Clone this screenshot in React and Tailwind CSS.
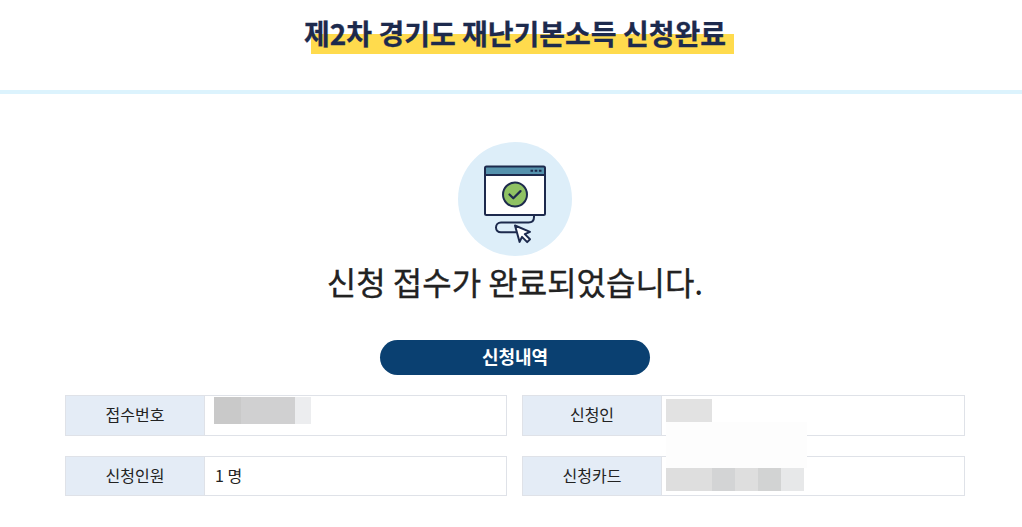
const fontStack = { fontFamily: '"Noto Sans CJK KR", "Noto Sans", sans-serif' };

function CompleteIcon() {
  return (
    <svg width="114" height="114" viewBox="0 0 114 114" fill="none">
      <circle cx="57" cy="57" r="57" fill="#ddeef9" />
      <rect x="27" y="24.5" width="60" height="48.5" rx="1.5" fill="#ffffff" />
      <path d="M27 33V26a1.5 1.5 0 0 1 1.5-1.5h57A1.5 1.5 0 0 1 87 26v7z" fill="#5592ad" />
      <rect x="27" y="24.5" width="60" height="48.5" rx="1.5" stroke="#1d2a4d" strokeWidth="2" />
      <path d="M27 33H87" stroke="#1d2a4d" strokeWidth="2" />
      <path d="M72.5 28.7h2.6M76.7 28.7h2.6M80.9 28.7h2.6" stroke="#1d2a4d" strokeWidth="2" />
      <circle cx="57" cy="52.5" r="12" fill="#8fc263" stroke="#1d2a4d" strokeWidth="2" />
      <path d="M51.5 52.5l3.8 3.8 7.2-7.2" stroke="#1d2a4d" strokeWidth="2.2" strokeLinecap="round" strokeLinejoin="round" />
      <path d="M76 73v2c0 3.5-2 5.5-5.5 5.5H43c-3 0-5 2.2-5 5s2 4.8 5 4.8h15" stroke="#1d2a4d" strokeWidth="2" strokeLinecap="round" />
      <path d="M57 83.5l15 6.4-5.2 2.2 5.2 5.2-2.8 2.8-5.2-5.2-2.4 5z" fill="#ffffff" stroke="#1d2a4d" strokeWidth="2" strokeLinejoin="round" />
    </svg>
  );
}

function InfoCell({ label, children }) {
  return (
    <div className="flex h-[40.5px] border border-[#dfe2e8] bg-white">
      <div className="flex w-[139px] shrink-0 items-center justify-center border-r border-[#dfe2e8] bg-[#e4ecf6] pb-[2px] text-[16px] text-[#222222]">
        {label}
      </div>
      <div className="flex flex-1 items-center px-[10px] pb-[2px] text-[16px] text-[#222222]">{children}</div>
    </div>
  );
}

export default function App() {
  return (
    <div className="h-[527px] w-[1022px] overflow-hidden bg-white" style={fontStack}>
      <header className="flex h-[94px] justify-center border-b-4 border-[#dcf3fd] pt-[13px] pl-[8px]">
        <h1 className="relative h-[40px] text-[28px] leading-[40px] font-bold text-[#1d2a4d] [-webkit-text-stroke:0.3px_#1d2a4d]">
          <span className="absolute top-[21px] right-[-8px] left-[7px] h-[20px] bg-[#ffdb4d]" />
          <span className="relative">제2차 경기도 재난기본소득 신청완료</span>
        </h1>
      </header>

      <main className="flex flex-col items-center pt-[48px]">
        <div className="flex w-full flex-col items-center pl-[8px]">
          <CompleteIcon />
          <h2 className="mt-[2px] h-[46px] text-[32px] leading-[46px] font-normal text-[#222222]">
            <span className="[-webkit-text-stroke:0.35px_#222222]">신청 접수가 완료되었습니다</span>.
          </h2>
          <div className="mt-[36px] flex h-[35px] w-[270px] items-center justify-center rounded-full bg-[#0a4071] pb-[2px] text-[18px] font-bold text-white">
            신청내역
          </div>
        </div>

        <div className="relative mt-[20px] grid w-full grid-cols-[442px_443px] gap-x-[15px] gap-y-[20px] pl-[65px]">
          <InfoCell label="접수번호" />
          <InfoCell label="신청인" />
          <InfoCell label="신청인원">1 명</InfoCell>
          <InfoCell label="신청카드" />

          {/* mosaic blocks hiding personal data */}
          <div className="absolute top-[2px] left-[214px] flex h-[27px]">
            <div className="w-[27px] bg-[#c9c9c9]" />
            <div className="w-[54px] bg-[#d0d0d1]" />
            <div className="w-[16px] bg-[#ecedef]" />
          </div>
          <div className="absolute top-[4px] left-[666px] h-[23px] w-[46px] bg-[#e2e2e2]" />
          <div className="absolute top-[27px] left-[666px] h-[46px] w-[141px] bg-[#fdfdfd]" />
          <div className="absolute top-[73px] left-[666px] flex h-[23px]">
            <div className="w-[46px] bg-[#dedede]" />
            <div className="w-[23px] bg-[#d3d4d5]" />
            <div className="w-[23px] bg-[#dedede]" />
            <div className="w-[23px] bg-[#d2d3d3]" />
            <div className="w-[23px] bg-[#e7e8e9]" />
          </div>
        </div>
      </main>
    </div>
  );
}
